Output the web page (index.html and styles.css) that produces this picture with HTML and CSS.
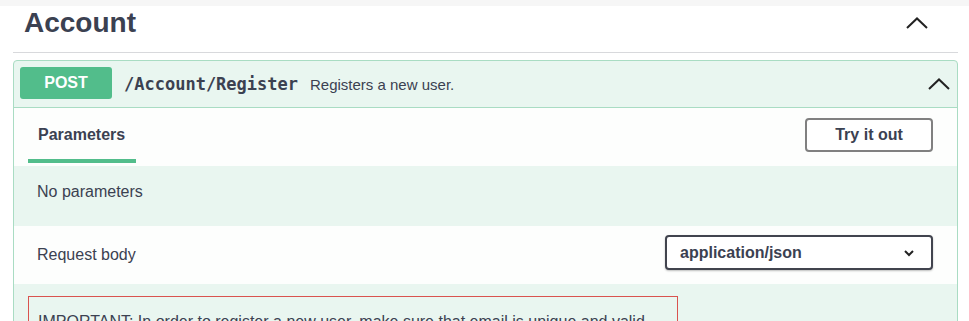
FILE: index.html
```html
<!DOCTYPE html>
<html lang="en">
<head>
    <meta charset="UTF-8">
    <meta name="viewport" content="width=device-width, initial-scale=1.0">
    <title>Account</title>
    <link rel="stylesheet" href="styles.css">
</head>
<body>

    <div class="tag-section">
        <div class="tag-header">
            <h3>Account</h3>
            <svg class="chevron" width="22" height="12" viewBox="0 0 22 12"><path d="M1 11 L11 1.5 L21 11" fill="none" stroke="#222" stroke-width="2"/></svg>
        </div>

        <div class="opblock">
            <div class="summary">
                <span class="method">POST</span>
                <span class="path">/Account/Register</span>
                <span class="summary-desc">Registers a new user.</span>
                <svg class="chevron op-chevron" width="22" height="12" viewBox="0 0 22 12"><path d="M1 11 L11 1.5 L21 11" fill="none" stroke="#222" stroke-width="2"/></svg>
            </div>

            <div class="section-header">
                <div class="tab">Parameters</div>
                <button class="try-out" type="button">Try it out</button>
            </div>
            <div class="section-body">
                No parameters
            </div>

            <div class="section-header body-header">
                <div class="label">Request body</div>
                <div class="select">
                    <span>application/json</span>
                    <svg width="12" height="8" viewBox="0 0 12 8"><path d="M2 2 L6 6 L10 2" fill="none" stroke="#222" stroke-width="2"/></svg>
                </div>
            </div>
            <div class="request-body">
                <div class="important">
                    IMPORTANT: In order to register a new user, make sure that email is unique and valid.
                </div>
            </div>
        </div>
    </div>

</body>
</html>
```

FILE: styles.css
```css
body {
    font-family: "Liberation Sans", Arial, sans-serif;
    margin: 0;
    background: #fff;
    color: #3b4151;
    border-top: 6px solid #f6f6f6;
}
.tag-section {
    padding: 0 11px 0 13px;
}
.tag-header {
    display: flex;
    align-items: center;
    justify-content: space-between;
    height: 46px;
    margin-bottom: 7px;
    padding: 0 30px 0 11px;
    border-bottom: 1px solid #d8d9dc;
}
.tag-header h3 {
    margin: 0;
    font-size: 28px;
    font-weight: bold;
    position: relative;
    top: -6px;
}
.tag-header .chevron {
    position: relative;
    top: -6px;
}
.opblock {
    border: 1px solid #a9dcc3;
    border-radius: 4px;
    background: #e9f6f0;
    height: 400px;
}
.summary {
    display: flex;
    align-items: center;
    height: 46px;
    padding: 0 7px 0 6px;
    border-bottom: 1px solid #a9dcc3;
}
.method {
    width: 92px;
    height: 32px;
    line-height: 32px;
    border-radius: 3px;
    background: #52bd8b;
    color: #fff;
    font-weight: bold;
    font-size: 16px;
    text-align: center;
    margin-right: 12px;
    margin-top: -3px;
}
.path {
    font-family: "DejaVu Sans Mono", "Liberation Mono", monospace;
    font-weight: bold;
    font-size: 17px;
    color: #3b4151;
    margin-right: 12px;
}
.summary-desc {
    font-size: 15px;
    color: #3b4151;
    flex: 1;
}
.section-header {
    display: flex;
    align-items: center;
    justify-content: space-between;
    height: 58px;
    padding: 0 24px 0 14px;
    background: #fdfefd;
}
.tab {
    align-self: flex-start;
    width: 108px;
    height: 55px;
    box-sizing: border-box;
    padding: 0 10px;
    border-bottom: 4px solid #52bd8b;
    font-weight: bold;
    font-size: 16px;
    line-height: 54px;
}
.try-out {
    width: 128px;
    height: 34px;
    border: 2px solid #808080;
    border-radius: 4px;
    background: #fff;
    color: #3b4151;
    font-family: "Liberation Sans", Arial, sans-serif;
    font-weight: bold;
    font-size: 16px;
    cursor: pointer;
    margin-top: -4px;
}
.section-body {
    height: 60px;
    padding: 17px 23px 0;
    box-sizing: border-box;
    font-size: 16px;
}
.body-header {
    padding-left: 23px;
}
.label {
    font-size: 16px;
}
.select {
    display: flex;
    align-items: center;
    justify-content: space-between;
    width: 268px;
    height: 35px;
    box-sizing: border-box;
    padding: 0 16px 0 13px;
    border: 2px solid #41444e;
    border-radius: 4px;
    background: #fff;
    font-weight: bold;
    font-size: 16px;
    box-shadow: 0 1px 2px rgba(0, 0, 0, .25);
    margin-top: -5px;
}
.request-body {
    padding: 12px 14px;
}
.important {
    width: 630px;
    border: 1px solid #d9534f;
    padding: 16px 9px;
    font-size: 16px;
    color: #3b4151;
}
```
